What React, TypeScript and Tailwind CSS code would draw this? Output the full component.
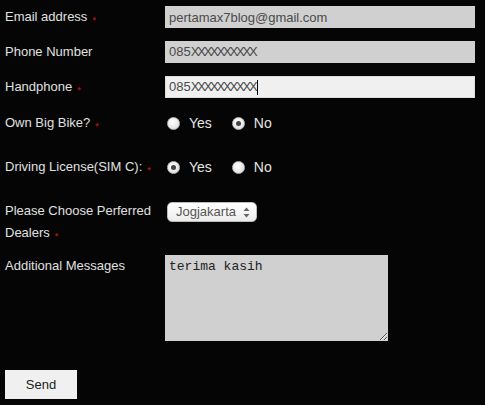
import React from 'react'

function Req() {
  return <span className="ml-[5px] text-[9px] font-bold text-[#a81010] align-top relative top-[3px]">*</span>
}

function Radio({ checked }: { checked?: boolean }) {
  return (
    <span className="w-[13px] h-[13px] rounded-full bg-[radial-gradient(circle_at_40%_35%,#ffffff,#d8d8d8)] border border-[#bbb] flex items-center justify-center">
      {checked && <span className="w-[5px] h-[5px] rounded-full bg-[#444]" />}
    </span>
  )
}

function RadioPair({ yes }: { yes: boolean }) {
  return (
    <div className="flex items-center h-[22px] pl-[2px] text-[14px] text-[#e4e4e4]">
      <Radio checked={yes} />
      <span className="ml-[9px]">Yes</span>
      <span className="ml-[20px]"><Radio checked={!yes} /></span>
      <span className="ml-[9px]">No</span>
    </div>
  )
}

function Phone() {
  return (
    <>
      085<span className="tracking-[-2.2px]">XXXXXXXXXX</span>
    </>
  )
}

export default function App() {
  const label = 'w-[160px] shrink-0 text-[13px] text-[#e0e0e0] leading-[22px]'
  return (
    <div
      className="w-[485px] h-[405px] bg-[#050505] pt-[6px] pl-[5px]"
      style={{ fontFamily: '"Liberation Sans", Arial, sans-serif' }}
    >
      <div className="flex">
        <div className={label}>Email address<Req /></div>
        <input
          readOnly
          value="pertamax7blog@gmail.com"
          className="w-[310px] h-[22px] bg-[#d0d0d0] px-[4px] text-[13px] text-[#4a4a4a] outline-none"
        />
      </div>
      <div className="flex mt-[13px]">
        <div className={label}>Phone Number</div>
        <div className="w-[310px] h-[22px] bg-[#d0d0d0] px-[4px] flex items-center text-[13px] text-[#4a4a4a]">
          <Phone />
        </div>
      </div>
      <div className="flex mt-[13px]">
        <div className={label}>Handphone<Req /></div>
        <div className="w-[310px] h-[22px] bg-[#f0f0f0] border border-[#ddd] px-[3px] flex items-center text-[13px] text-[#4a4a4a]">
          <Phone />
          <span className="w-px h-[15px] bg-black ml-[2px]" />
        </div>
      </div>
      <div className="flex mt-[14px]">
        <div className={label}>Own Big Bike?<Req /></div>
        <RadioPair yes={false} />
      </div>
      <div className="flex mt-[22px]">
        <div className={label}>Driving License(SIM C):<Req /></div>
        <RadioPair yes={true} />
      </div>
      <div className="flex mt-[22px]">
        <div className={label}>
          Please Choose Perferred
          <br />
          Dealers<Req />
        </div>
        <div className="mt-[2px] ml-[2px] w-[90px] h-[20px] rounded-[5px] border border-[#bbb] bg-[linear-gradient(#ffffff,#ececec)] flex items-center justify-between pl-[8px] pr-[6px] text-[13px] text-[#555]">
          <span>Jogjakarta</span>
          <svg width="7" height="11" viewBox="0 0 7 11">
            <path d="M3.5 0.5 L6.5 4 L0.5 4 Z" fill="#666" />
            <path d="M3.5 10.5 L6.5 7 L0.5 7 Z" fill="#666" />
          </svg>
        </div>
      </div>
      <div className="flex mt-[11px]">
        <div className={label}>Additional Messages</div>
        <textarea
          readOnly
          value="terima kasih"
          className="w-[223px] h-[86px] bg-[#d0d0d0] px-[4px] py-[4px] text-[13px] leading-[16px] text-[#222] outline-none"
          style={{ fontFamily: '"Liberation Mono", "Courier New", monospace' }}
        />
      </div>
      <button className="mt-[29px] w-[72px] h-[29px] bg-[#f0f0f0] text-[13px] text-[#222]">
        Send
      </button>
    </div>
  )
}
